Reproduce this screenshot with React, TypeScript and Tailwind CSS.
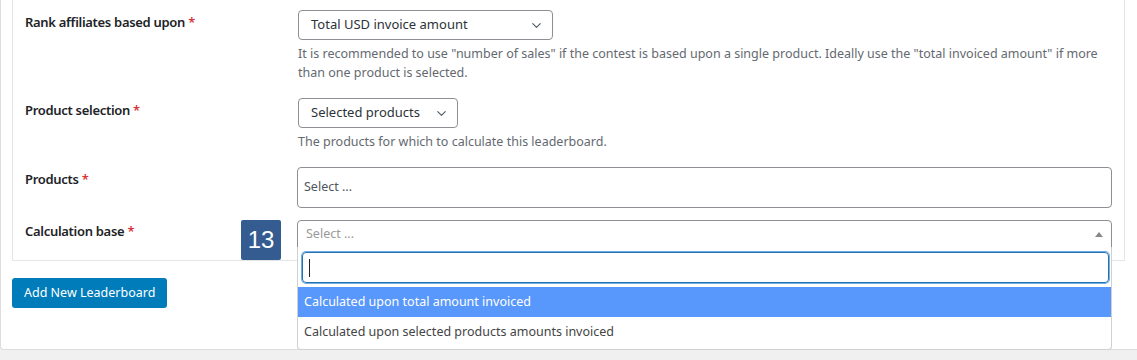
import { ChevronDown } from 'lucide-react';

const font = { fontFamily: '"Noto Sans", "Liberation Sans", sans-serif' };

function Label({ text, top = 'pt-[2px]' }: { text: string; top?: string }) {
  return (
    <div className={`w-[285px] shrink-0 pl-[12px] ${top} text-[13px] leading-[20px] font-semibold tracking-[-0.3px] text-[#1d2327]`}>
      {text} <span className="text-[#d63638]">*</span>
    </div>
  );
}

export default function App() {
  return (
    <div className="h-[360px] w-[1137px] overflow-hidden bg-[#f0f0f1]" style={font}>
      <div className="relative w-[1160px] h-[350px] bg-white border-l border-b border-[#dcdcde] rounded-bl-[4px] pl-[11px]">
        {/* Settings card */}
        <div className="w-[1113px] border-x border-b border-[#e5e5e5] bg-white">
          {/* Rank affiliates */}
          <div className="flex pt-[10px]">
            <Label text="Rank affiliates based upon" />
            <div>
              <div className="flex items-center justify-between w-[255px] h-[30px] border border-[#8c8f94] rounded-[4px] pl-[12px] pr-[8px] text-[13px] text-[#2c3338]">
                <span>Total USD invoice amount</span>
                <ChevronDown className="w-[15px] h-[15px] text-[#50575e]" strokeWidth={1.75} />
              </div>
              <p className="mt-[4px] text-[12.5px] leading-[19px] text-[#646970] whitespace-nowrap">
                It is recommended to use "number of sales" if the contest is based upon a single product. Ideally use the "total invoiced amount" if more
                <br />
                than one product is selected.
              </p>
            </div>
          </div>

          {/* Product selection */}
          <div className="flex pt-[16px]">
            <Label text="Product selection" />
            <div>
              <div className="flex items-center justify-between w-[160px] h-[30px] border border-[#8c8f94] rounded-[4px] pl-[12px] pr-[8px] text-[13px] text-[#2c3338]">
                <span>Selected products</span>
                <ChevronDown className="w-[15px] h-[15px] text-[#50575e]" strokeWidth={1.75} />
              </div>
              <p className="mt-[4px] text-[12.5px] leading-[19px] text-[#646970]">
                The products for which to calculate this leaderboard.
              </p>
            </div>
          </div>

          {/* Products */}
          <div className="flex pt-[16px]">
            <Label text="Products" />
            <div className="flex items-center w-[815px] h-[41px] -ml-[1px] border border-[#8c8f94] rounded-[4px] pl-[6px] text-[12.5px] text-[#50575e]">
              Select ...
            </div>
          </div>

          {/* Calculation base */}
          <div className="flex pt-[12px] pb-[12px]">
            <Label text="Calculation base" top="pt-[1px]" />
            <div className="flex items-center justify-between w-[815px] h-[28px] -ml-[1px] border border-[#8c8f94] rounded-t-[4px] pl-[8px] pr-[8px] text-[12.5px] text-[#999]">
              <span>Select ...</span>
              <span className="w-0 h-0 border-x-[4px] border-x-transparent border-b-[5px] border-b-[#888]" />
            </div>
          </div>
        </div>

        {/* Add button */}
        <div className="pt-[17px]">
          <button className="h-[30px] px-[12px] bg-[#007cba] rounded-[3px] text-[12.5px] text-white">
            Add New Leaderboard
          </button>
        </div>

        {/* Step badge */}
        <div className="absolute left-[240px] top-[220px] w-[40px] h-[40px] rounded-[2px] bg-[#345c91] flex items-center justify-center text-white text-[24px]" style={{ fontFamily: '"Liberation Sans", Arial, sans-serif' }}>
          13
        </div>

        {/* Open dropdown */}
        <div className="absolute left-[296px] top-[247px] w-[815px] h-[103px] bg-white border border-[#d0d0d0] border-t-0 rounded-b-[4px]">
          <div className="pt-[5px] pl-[4px] pr-[2px]">
            <div className="h-[31px] border border-[#2271b1] rounded-[4px] shadow-[0_0_0_1px_#72aee6] flex items-center pl-[6px]">
              <span className="w-[1px] h-[18px] bg-[#1d2327]" />
            </div>
          </div>
          <div className="mt-[4px] h-[30px] bg-[#5897fb] text-white text-[12.5px] flex items-center pl-[6px]">
            Calculated upon total amount invoiced
          </div>
          <div className="h-[30px] text-[#444] text-[12.5px] flex items-center pl-[6px]">
            Calculated upon selected products amounts invoiced
          </div>
        </div>
      </div>
    </div>
  );
}
